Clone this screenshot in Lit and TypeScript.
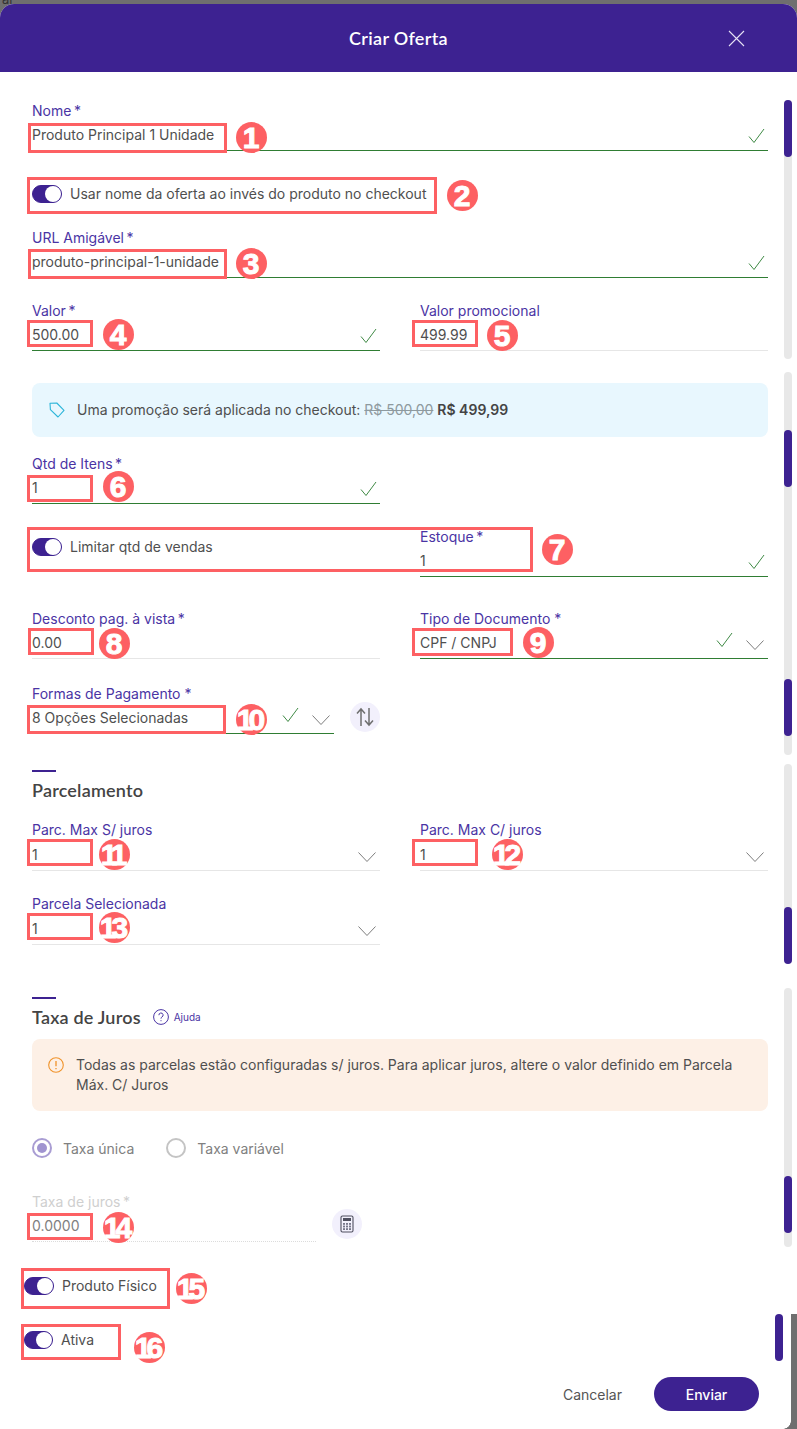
import { LitElement, html, css, svg } from "lit";
import { customElement } from "lit/decorators.js";

const check = html`<svg class="ic ck" width="17" height="16" viewBox="0 0 17 16"><path d="M1 8.5 L6 14.5 L16 1" fill="none" stroke="#3f8a45" stroke-width="1"/></svg>`;
const chev = html`<svg class="ic chev" width="18" height="10" viewBox="0 0 18 10"><path d="M.5 .5 L9 9.5 L17.5 .5" fill="none" stroke="#7d7d7d" stroke-width="1"/></svg>`;

const boxes = [
  [28, 123, 199, 30], [27, 177, 410, 37], [28, 249, 199, 30], [27, 320, 66, 27],
  [412, 320, 66, 27], [27, 475, 66, 27], [27, 527, 506, 45], [28, 628, 66, 27],
  [412, 628, 101, 28], [27, 705, 199, 29], [27, 839, 66, 27], [412, 839, 66, 27],
  [27, 913, 66, 27], [27, 1213, 66, 27], [21, 1268, 149, 41], [21, 1324, 100, 36],
];
const badges = [
  [251, 137], [462, 195], [251, 263], [118, 334], [502, 335], [118, 486], [557, 549], [114, 643],
  [538, 642], [251, 719], [114, 854], [507, 854], [114, 927], [118, 1227], [191, 1288], [149, 1347],
];
const bars = [
  [784, 100, 259, false], [784, 100, 57, true], [784, 372, 383, false], [784, 430, 57, true],
  [784, 679, 57, true], [784, 764, 199, false], [784, 907, 57, true], [784, 988, 259, false],
  [784, 1176, 57, true], [775, 1314, 47, true],
];

@customElement("app-root")
export class AppRoot extends LitElement {
  static styles = css`
    :host { display: block; width: 797px; height: 1429px; background: #6f6f6f; overflow: hidden; position: relative;
      font-family: Inter, "Liberation Sans", sans-serif; font-size: 14px; color: #4f4f4f; }
    .sliver { position: absolute; left: 2px; top: -9px; font-size: 13px; color: #333; }
    .modal { position: absolute; inset: 4px 0 0 0; background: #fff; border-radius: 14px 14px 0 0; display: flex; flex-direction: column; }
    header { height: 68px; flex: none; background: #3d2291; border-radius: 14px 14px 0 0; display: flex; align-items: center; justify-content: center; position: relative; }
    header h1 { margin: 0; font: 600 18px/20px Lato, "Open Sans", sans-serif; color: #fff; letter-spacing: .3px; }
    .close { position: absolute; left: 728px; top: 26px; display: block; }
    .form { padding: 31px 29px 0 32px; display: flex; flex-direction: column; }
    .field { height: 48px; display: flex; flex-direction: column; min-width: 0; }
    .field.tall { height: 49px; }
    .half { width: 348px; }
    .field label { height: 16px; line-height: 16px; color: #4a34a4; }
    .ctl { flex: 1; display: flex; align-items: flex-end; border-bottom: 1px solid #e6e6e6; }
    .ctl.ok { border-bottom-color: #2f7d33; }
    .val { flex: 1; line-height: 18px; margin-bottom: 6px; }
    .ic { flex: none; display: block; }
    .ck { margin: 0 3px 6px 0; }
    .chev { margin: 0 4px 8px 0; }
    .sel .ck { margin: 0 13px 10px 0; }
    .row { display: grid; grid-template-columns: 348px 348px; column-gap: 40px; }
    .tg { display: flex; align-items: center; gap: 8px; height: 18px; line-height: 18px; }
    .sw { width: 28px; height: 16px; flex: none; border: 1px solid #3d2291; border-radius: 9px; background: #3d2291; position: relative; }
    .sw::after { content: ""; position: absolute; right: 0; top: 0; width: 16px; height: 16px; background: #fff; border-radius: 50%; }
    .narrow .sw { width: 27px; }
    .banner { height: 54px; background: #e8f7fe; border-radius: 8px; display: flex; align-items: center; padding-left: 17px; gap: 12px; }
    .banner span { margin-bottom: 2px; }
    .banner s { color: #8e9a9f; }
    .banner b { color: #444; font-weight: 600; }
    .rule { width: 24px; height: 2px; background: #3d2291; }
    .sec { height: 24px; font: 600 18px/24px Lato, "Open Sans", sans-serif; letter-spacing: .2px; color: #444; display: flex; align-items: center; }
    .help { display: flex; align-items: center; gap: 5px; margin-left: 12px; color: #4a34a4; font: 400 10px/16px Inter, sans-serif; letter-spacing: 0; }
    .alert { height: 72px; box-sizing: border-box; background: #fdf0e6; border-radius: 8px; display: flex; padding: 16px 28px 0 16px; gap: 12px; line-height: 20px; }
    .alert svg { flex: none; margin-top: 2px; }
    .radios { display: flex; align-items: center; height: 20px; color: #808080; }
    .rd { width: 20px; height: 20px; box-sizing: border-box; border-radius: 50%; border: 2px solid #c4c4c4; margin-right: 11px; flex: none; display: flex; align-items: center; justify-content: center; }
    .rd.on { border-color: #a99dd3; }
    .rd.on::after { content: ""; width: 10px; height: 10px; border-radius: 50%; background: #a094d0; }
    .rtxt { margin-right: 32px; }
    .pay { display: flex; gap: 16px; align-items: flex-start; }
    .pay .field { width: 302px; }
    .round { width: 30px; height: 30px; border-radius: 50%; background: #f2f0fc; display: flex; align-items: center; justify-content: center; flex: none; }
    .sort { margin-top: 16px; }
    .tax { display: flex; gap: 16px; align-items: flex-start; }
    .tax .field { width: 284px; }
    .tax label { color: #cfcfcf; }
    .tax .val { color: #808080; }
    .tax .ctl { border-bottom: 1px dotted #dcdcdc; }
    .calc { margin-top: 15px; }
    .outdent { margin-left: -8px; }
    .footer { display: flex; justify-content: flex-end; align-items: center; padding-right: 9px; gap: 32px; }
    .cancel { color: #555; }
    .send { width: 105px; height: 34px; border-radius: 17px; background: #3d2291; color: #fff; font-weight: 500; display: flex; align-items: center; justify-content: center; }
    .m34 { margin-top: 34px; } .m27 { margin-top: 27px; } .m25 { margin-top: 25px; } .m32 { margin-top: 32px; }
    .m19 { margin-top: 19px; } .m28 { margin-top: 28px; } .m36 { margin-top: 36px; } .m6 { margin-top: 6px; }
    .m20 { margin-top: 20px; } .m52 { margin-top: 52px; } .m9 { margin-top: 9px; } .m10 { margin-top: 10px; }
    .m35 { margin-top: 35px; }
    .box { position: absolute; box-sizing: border-box; border: 3px solid #fd6063; pointer-events: none; }
    .badge { position: absolute; width: 31px; height: 31px; margin: -15.5px 0 0 -15.5px; border-radius: 50%; background: #fd6063; color: #fff;
      font: 700 30px/32px "Liberation Sans", sans-serif; -webkit-text-stroke: 1px #fff; text-align: center; }
    .badge.two { letter-spacing: -5px; text-indent: -5px; white-space: nowrap; }
    .bar { position: absolute; width: 8px; border-radius: 4px; background: #e8e8e8; }
    .bar.th { background: #3d2291; }
    .strip { position: absolute; left: 791px; top: 1314px; width: 6px; height: 115px; background: #6f6f6f; }
    .corner { position: absolute; left: 783px; top: 1421px; width: 8px; height: 8px; background: radial-gradient(circle at 0 0, transparent 7.5px, #6f6f6f 8px); }
  `;

  field(label: string, val: string, ok: boolean, sel = false, extra = "") {
    return html`<div class="field ${extra}">
      <label>${label}</label>
      <div class="ctl ${ok ? "ok" : ""} ${sel ? "sel" : ""}">
        <span class="val">${val}</span>
        ${ok ? check : ""}
        ${sel ? chev : ""}
      </div>
    </div>`;
  }

  toggle(text: string, cls = "") {
    return html`<div class="tg ${cls}"><span class="sw"></span><span>${text}</span></div>`;
  }

  render() {
    return html`
      <div class="sliver">al</div>
      <div class="modal">
        <header>
          <h1>Criar Oferta</h1>
          <svg class="close" width="17" height="17" viewBox="0 0 17 17"><path d="M1 1 L16 16 M16 1 L1 16" stroke="#e6e1f5" stroke-width="1.1"/></svg>
        </header>
        <div class="form">
          ${this.field("Nome\u2009*", "Produto Principal 1 Unidade", true)}
          ${this.toggle("Usar nome da oferta ao invés do produto no checkout", "m34")}
          ${this.field("URL Amigável\u2009*", "produto-principal-1-unidade", true, false, "m27")}
          <div class="row m25">
            ${this.field("Valor\u2009*", "500.00", true)}
            ${this.field("Valor promocional", "499.99", false)}
          </div>
          <div class="banner m32">
            <svg width="16" height="16" viewBox="0 0 16 16"><path d="M1 1.2 L7.8 1 L15 8.4 L9 15 L1.4 7.6 Z M4.3 4 h.1" fill="none" stroke="#2cb5d9" stroke-width="1.1" stroke-linejoin="round"/></svg>
            <span>Uma promoção será aplicada no checkout: <s>R$ 500,00</s> <b>R$ 499,99</b></span>
          </div>
          ${this.field("Qtd de Itens\u2009*", "1", true, false, "m19 half")}
          <div class="row m25">
            <div class="tg m9">
              <span class="sw"></span><span>Limitar qtd de vendas</span>
            </div>
            ${this.field("Estoque\u2009*", "1", true)}
          </div>
          <div class="row m34">
            ${this.field("Desconto pag. à vista\u2009*", "0.00", false)}
            ${this.field("Tipo de Documento *", "CPF / CNPJ", true, true)}
          </div>
          <div class="pay m27">
            ${this.field("Formas de Pagamento *", "8 Opções Selecionadas", true, true)}
            <div class="round sort">
              <svg width="18" height="20" viewBox="0 0 18 20"><path d="M5 19 V2 M1 6.5 L5 2 L9 6.5 M13 1 V18 M9 13.5 L13 18 L17 13.5" fill="none" stroke="#6f6f6f" stroke-width="1.5"/></svg>
            </div>
          </div>
          <div class="rule m36"></div>
          <div class="sec m6">Parcelamento</div>
          <div class="row m20">
            ${this.field("Parc. Max S/ juros", "1", false, true, "tall")}
            ${this.field("Parc. Max C/ juros", "1", false, true, "tall")}
          </div>
          ${this.field("Parcela Selecionada", "1", false, true, "m25 half tall")}
          <div class="rule m52"></div>
          <div class="sec m6">Taxa de Juros
            <span class="help">
              <svg width="16" height="16" viewBox="0 0 16 16"><circle cx="8" cy="8" r="7.4" fill="none" stroke="#4a34a4"/><path d="M5.9 6.2 A2.1 2.1 0 1 1 8.9 8 C8.2 8.4 8 8.8 8 9.6 M8 11.2 v1" fill="none" stroke="#4a34a4"/></svg>
              Ajuda
            </span>
          </div>
          <div class="alert m10">
            <svg width="16" height="16" viewBox="0 0 16 16"><circle cx="8" cy="8" r="7.3" fill="none" stroke="#f0932b" stroke-width="1.1"/><path d="M8 4 V9.2 M8 11 v1.2" stroke="#f0932b" stroke-width="1.3"/></svg>
            <span>Todas as parcelas estão configuradas s/ juros. Para aplicar juros, altere o valor definido em Parcela Máx. C/ Juros</span>
          </div>
          <div class="radios m27">
            <span class="rd on"></span><span class="rtxt">Taxa única</span>
            <span class="rd"></span><span>Taxa variável</span>
          </div>
          <div class="tax m36">
            ${this.field("Taxa de juros\u2009*", "0.0000", false)}
            <div class="round calc">
              <svg width="16" height="18" viewBox="0 0 16 18">
                <rect x="2" y="1" width="12" height="16" rx="1.5" fill="none" stroke="#4f4f5f" stroke-width="1.1"/>
                <rect x="4" y="3" width="8" height="3" fill="#4f4f5f"/>
                ${[8, 10.6, 13.2].map((y) => [4, 7, 10].map((x) => svg`<rect x=${x} y=${y} width="2" height="1.8" fill="#77778a"/>`))}
              </svg>
            </div>
          </div>
          ${this.toggle("Produto Físico", "m35 outdent")}
          ${this.toggle("Ativa", "m36 outdent narrow")}
          <div class="footer m28">
            <span class="cancel">Cancelar</span>
            <span class="send">Enviar</span>
          </div>
        </div>
      </div>
      ${bars.map(([x, y, h, t]) => html`<div class="bar ${t ? "th" : ""}" style="left:${x}px;top:${y}px;height:${h}px"></div>`)}
      <div class="strip"></div>
      <div class="corner"></div>
      ${boxes.map(([x, y, w, h]) => html`<div class="box" style="left:${x}px;top:${y}px;width:${w}px;height:${h}px"></div>`)}
      ${badges.map(([x, y], i) => html`<div class="badge ${i >= 9 ? "two" : ""}" style="left:${x}px;top:${y}px">${i + 1}</div>`)}
    `;
  }
}
